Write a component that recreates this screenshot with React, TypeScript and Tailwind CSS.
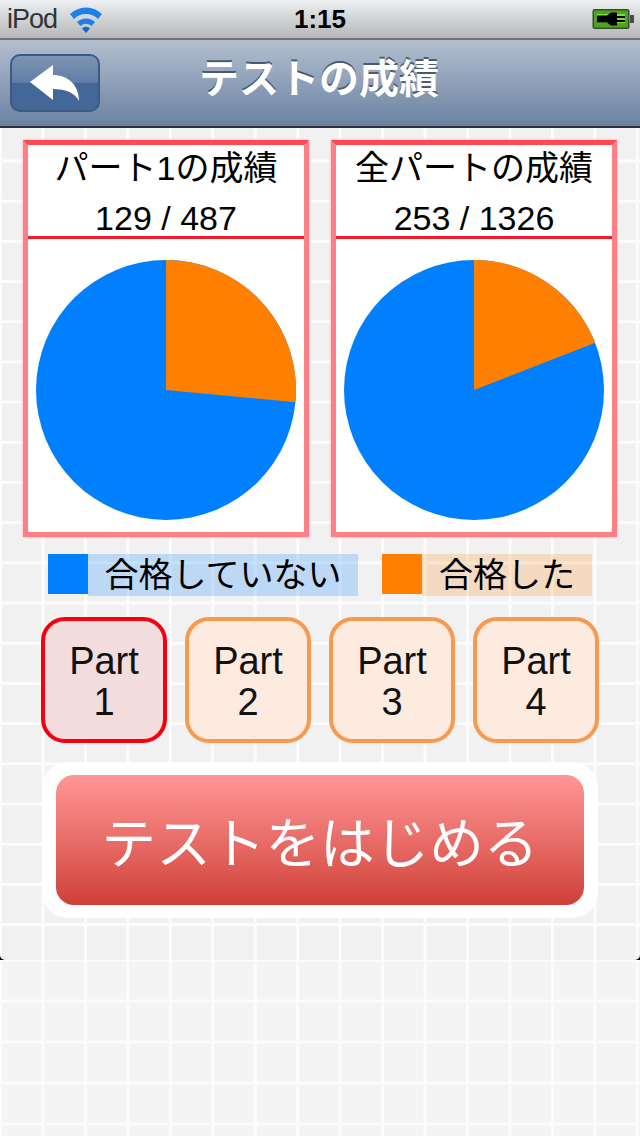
import React from 'react';

const jp = "font-['Liberation_Sans','Noto_Sans_CJK_JP',sans-serif]";
const cjk = "font-['Noto_Sans_CJK_JP',sans-serif]";

const Pie = ({ pct }: { pct: number }) => {
  const a = (pct / 100) * 2 * Math.PI;
  const x = 130 + 130 * Math.sin(a);
  const y = 130 - 130 * Math.cos(a);
  return (
    <svg width="260" height="260" viewBox="0 0 260 260">
      <circle cx="130" cy="130" r="130" fill="#007fff" />
      <path d={`M130 130 L130 0 A130 130 0 0 1 ${x} ${y} Z`} fill="#ff8000" />
    </svg>
  );
};

const ScoreCard = ({ title, score, pct }: { title: string; score: string; pct: number }) => (
  <div className="w-[286px] h-[397px] bg-white border-[5px] border-[#ff7f88] border-t-[#ff4a56] shadow-[0_0_2px_#ff9aa0] flex flex-col">
    <div className="h-[91px] flex flex-col items-center text-black">
      <div className={`${jp} text-[34px] leading-[40px] mt-[3px]`}>{title}</div>
      <div className={`${jp} text-[34px] leading-[36px] mt-[12px]`}>{score}</div>
    </div>
    <div className="h-[3px] bg-[#f01e2c]" />
    <div className="flex justify-center pt-[21px]">
      <Pie pct={pct} />
    </div>
  </div>
);

const LegendItem = ({ color, strip, label, width }: { color: string; strip: string; label: string; width: string }) => (
  <div className="flex items-start">
    <div className={`w-[40px] h-[40px] ${color}`} />
    <div className={`h-[42px] ${width} ${strip} ${jp} text-[34px] leading-[42px] text-black text-center`}>{label}</div>
  </div>
);

const PartButton = ({ n, active }: { n: number; active?: boolean }) => (
  <div
    className={`w-[126px] h-[126px] pt-[4px] rounded-[24px] border-[4px] flex flex-col items-center justify-center text-[#111] ${jp} text-[38px] leading-[41px] ${
      active ? 'border-[#f5000f] bg-[#f2dcdc]' : 'border-[#f59a50] bg-[#fdebdf]'
    }`}
  >
    <span>Part</span>
    <span>{n}</span>
  </div>
);

const lines =
  'bg-[linear-gradient(90deg,#fcfcfc_3px,transparent_3px),linear-gradient(180deg,#fcfcfc_3px,transparent_3px)]';

export default function App() {
  return (
    <div className="w-[640px] h-[1136px] overflow-hidden relative bg-black">
      {/* status bar */}
      <div className="h-[38px] bg-gradient-to-b from-[#eef1f2] to-[#b4b6b8] flex items-center pl-[7px] pr-[5px] relative">
        <span className="font-['Liberation_Sans',sans-serif] text-[27px] text-[#333] tracking-[-1px]">iPod</span>
        <svg className="ml-[12px]" width="34" height="28" viewBox="0 0 34 28">
          <path d="M1 9 A23 23 0 0 1 33 9 L29 14 A17 17 0 0 0 5 14 Z" fill="#1f7fe8" />
          <path d="M8 17 A13 13 0 0 1 26 17 L22.500 21 A8 8 0 0 0 11.500 21 Z" fill="#1f7fe8" />
          <path d="M17 28 L13 23.500 A5.500 5.500 0 0 1 21 23.500 Z" fill="#1466c8" />
        </svg>
        <span className="absolute left-0 right-0 text-center font-['Liberation_Sans',sans-serif] font-bold text-[26px] text-black">1:15</span>
        <svg className="ml-auto" width="43" height="22" viewBox="0 0 43 22">
          <rect x="0.500" y="1" width="37" height="20" rx="2" fill="#3c4a34" />
          <rect x="2" y="2.500" width="34" height="17" fill="#4aa51f" />
          <rect x="5" y="6" width="28" height="9" fill="#7fdc3e" />
          <rect x="38" y="7" width="4" height="8" fill="#4a4a4a" />
          <path d="M5 7.500 H15 L19 4.500 H25 V8 H33 V10 H25 V12 H33 V14 H25 V17.500 H19 L15 14.500 H5 Z" fill="#000" />
        </svg>
      </div>
      <div className="h-[2px] bg-[#6f7276]" />
      {/* nav bar */}
      <div className="h-[86px] bg-gradient-to-b from-[#b3bfcf] to-[#6b82a1] relative flex items-center pl-[10px]">
        <div className="w-[90px] h-[58px] rounded-[10px] border-2 border-[#3d5a82] bg-[linear-gradient(180deg,#7d94b4_0%,#5f7ea8_49%,#44679a_50%,#44679a_100%)] flex items-center justify-center">
          <svg width="50" height="36" viewBox="0 0 50 36">
            <path d="M0 17 L23 0 V10 C38 10 49 20 49 36 C45 28 36 24 23 24 V35 Z" fill="#fff" />
          </svg>
        </div>
        <div className={`absolute left-0 top-0 w-[638px] h-full pb-[14px] flex items-center justify-center text-white text-[40px] font-bold ${cjk} [text-shadow:0_-2px_0_#4a5a70]`}>
          テストの成績
        </div>
      </div>
      <div className="h-[2px] bg-[#2d3036]" />
      {/* content */}
      <div className={`bg-[#f1f1f1] ${lines} bg-[size:42.46px_40.2px] bg-[position:41.5px_31.5px] h-[832px] rounded-b-[5px] flex flex-col items-center pt-[12px]`}>
        <div className="flex gap-[22px]">
          <ScoreCard title="パート1の成績" score="129 / 487" pct={26.5} />
          <ScoreCard title="全パートの成績" score="253 / 1326" pct={19.08} />
        </div>
        <div className="w-[544px] flex justify-between mt-[17px]">
          <LegendItem color="bg-[#007fff]" strip="bg-[#007fff]/[0.22]" label="合格していない" width="w-[270px]" />
          <LegendItem color="bg-[#ff8000]" strip="bg-[#ff8000]/[0.2]" label="合格した" width="w-[170px]" />
        </div>
        <div className="flex gap-[18px] mt-[21px]">
          <PartButton n={1} active />
          <PartButton n={2} />
          <PartButton n={3} />
          <PartButton n={4} />
        </div>
        <div className="w-[556px] h-[156px] mt-[19px] bg-white rounded-[26px] pt-[13px] pl-[14px]">
          <div className={`w-[528px] h-[130px] rounded-[18px] bg-gradient-to-b from-[#ff9696] to-[#cf3f38] flex items-center justify-center text-white text-[54.6px] ${cjk}`}>
            テストをはじめる
          </div>
        </div>
      </div>
      <div className={`bg-[#f4f4f4] ${lines} bg-[size:42.46px_41px] bg-[position:41.5px_-1.5px] h-[176px]`} />
    </div>
  );
}
